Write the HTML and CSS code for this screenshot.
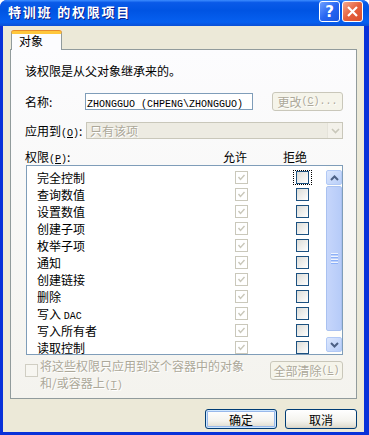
FILE: index.html
```html
<!DOCTYPE html>
<html lang="zh-CN">
<head>
<meta charset="utf-8">
<title>特训班 的权限项目</title>
<link rel="stylesheet" href="styles.css">
</head>
<body>
<div class="window">
  <div class="titlebar">
    <span class="title">特训班 的权限项目</span>
    <span class="tbtn help">?</span>
    <span class="tbtn close"><svg width="13" height="13" viewBox="0 0 13 13"><path d="M2 2 L11 11 M11 2 L2 11" stroke="#fff" stroke-width="2.2" fill="none"/></svg></span>
  </div>
  <div class="client">
    <div class="tabs"><span class="tab">对象</span></div>
    <div class="panel">
      <p class="info">该权限是从父对象继承来的。</p>
      <div class="row name-row">
        <span class="lbl">名称:</span>
        <span class="textbox"><span class="lat">ZHONGGUO (CHPENG\ZHONGGUO)</span></span>
        <span class="btn disabled change">更改<span class="lat">(<u>C</u>)...</span></span>
      </div>
      <div class="row apply-row">
        <span class="lbl">应用到<span class="lat">(<u>O</u>)</span>:</span>
        <span class="combo"><span class="combo-text">只有该项</span><span class="combo-btn"><svg width="9" height="6" viewBox="0 0 9 6"><path d="M1 1 L4.5 4.5 L8 1" stroke="#C9C7BA" stroke-width="1.6" fill="none"/></svg></span></span>
      </div>
      <div class="hdr">
        <span class="h1">权限<span class="lat">(<u>P</u>)</span>:</span>
        <span class="h2">允许</span>
        <span class="h3">拒绝</span>
      </div>
      <div class="listbox">
        <div class="rows">
          <div class="prow"><span class="pname">完全控制</span><span class="cb dis"><svg width="11" height="11" viewBox="0 0 11 11"><path d="M2.5 5 L4.5 7.5 L8.5 3" stroke="#C9C7BA" stroke-width="1.4" fill="none"/></svg></span><span class="focus"><span class="cb"></span></span></div>
          <div class="prow"><span class="pname">查询数值</span><span class="cb dis"><svg width="11" height="11" viewBox="0 0 11 11"><path d="M2.5 5 L4.5 7.5 L8.5 3" stroke="#C9C7BA" stroke-width="1.4" fill="none"/></svg></span><span class="nofocus"><span class="cb"></span></span></div>
          <div class="prow"><span class="pname">设置数值</span><span class="cb dis"><svg width="11" height="11" viewBox="0 0 11 11"><path d="M2.5 5 L4.5 7.5 L8.5 3" stroke="#C9C7BA" stroke-width="1.4" fill="none"/></svg></span><span class="nofocus"><span class="cb"></span></span></div>
          <div class="prow"><span class="pname">创建子项</span><span class="cb dis"><svg width="11" height="11" viewBox="0 0 11 11"><path d="M2.5 5 L4.5 7.5 L8.5 3" stroke="#C9C7BA" stroke-width="1.4" fill="none"/></svg></span><span class="nofocus"><span class="cb"></span></span></div>
          <div class="prow"><span class="pname">枚举子项</span><span class="cb dis"><svg width="11" height="11" viewBox="0 0 11 11"><path d="M2.5 5 L4.5 7.5 L8.5 3" stroke="#C9C7BA" stroke-width="1.4" fill="none"/></svg></span><span class="nofocus"><span class="cb"></span></span></div>
          <div class="prow"><span class="pname">通知</span><span class="cb dis"><svg width="11" height="11" viewBox="0 0 11 11"><path d="M2.5 5 L4.5 7.5 L8.5 3" stroke="#C9C7BA" stroke-width="1.4" fill="none"/></svg></span><span class="nofocus"><span class="cb"></span></span></div>
          <div class="prow"><span class="pname">创建链接</span><span class="cb dis"><svg width="11" height="11" viewBox="0 0 11 11"><path d="M2.5 5 L4.5 7.5 L8.5 3" stroke="#C9C7BA" stroke-width="1.4" fill="none"/></svg></span><span class="nofocus"><span class="cb"></span></span></div>
          <div class="prow"><span class="pname">删除</span><span class="cb dis"><svg width="11" height="11" viewBox="0 0 11 11"><path d="M2.5 5 L4.5 7.5 L8.5 3" stroke="#C9C7BA" stroke-width="1.4" fill="none"/></svg></span><span class="nofocus"><span class="cb"></span></span></div>
          <div class="prow"><span class="pname">写入 <span class="lat">DAC</span></span><span class="cb dis"><svg width="11" height="11" viewBox="0 0 11 11"><path d="M2.5 5 L4.5 7.5 L8.5 3" stroke="#C9C7BA" stroke-width="1.4" fill="none"/></svg></span><span class="nofocus"><span class="cb"></span></span></div>
          <div class="prow"><span class="pname">写入所有者</span><span class="cb dis"><svg width="11" height="11" viewBox="0 0 11 11"><path d="M2.5 5 L4.5 7.5 L8.5 3" stroke="#C9C7BA" stroke-width="1.4" fill="none"/></svg></span><span class="nofocus"><span class="cb"></span></span></div>
          <div class="prow"><span class="pname">读取控制</span><span class="cb dis"><svg width="11" height="11" viewBox="0 0 11 11"><path d="M2.5 5 L4.5 7.5 L8.5 3" stroke="#C9C7BA" stroke-width="1.4" fill="none"/></svg></span><span class="nofocus"><span class="cb"></span></span></div>
        </div>
        <div class="scrollbar">
          <span class="sbtn"><svg width="9" height="6" viewBox="0 0 9 6"><path d="M1 5 L4.5 1.5 L8 5" stroke="#4D6185" stroke-width="2" fill="none"/></svg></span>
          <span class="thumb"><span class="grip"></span><span class="grip"></span><span class="grip"></span><span class="grip"></span></span>
          <span class="track"></span>
          <span class="sbtn"><svg width="9" height="6" viewBox="0 0 9 6"><path d="M1 1 L4.5 4.5 L8 1" stroke="#4D6185" stroke-width="2" fill="none"/></svg></span>
        </div>
      </div>
      <div class="bottom">
        <span class="cb big dis"></span>
        <span class="applytext">将这些权限只应用到这个容器中的对象<br>和/或容器上<span class="lat">(<u>T</u>)</span></span>
        <span class="btn disabled clear">全部清除<span class="lat">(<u>L</u>)</span></span>
      </div>
    </div>
    <div class="footer">
      <span class="btn default">确定</span>
      <span class="btn">取消</span>
    </div>
  </div>
</div>
</body>
</html>
```
FILE: styles.css
```css
* { box-sizing: border-box; }
html, body { margin: 0; padding: 0; background: #fff; }
body { font-family: "Noto Sans CJK SC", "Noto Sans", sans-serif; font-size: 12px; color: #000; }
.lat { font-family: "Liberation Mono", monospace; font-size: 10px; line-height: 1; }
u { text-decoration: underline; }

.window {
  width: 369px; height: 435px;
  display: flex; flex-direction: column;
  background: #0831D9;
  border-radius: 7px 7px 0 0;
  overflow: hidden;
}
.titlebar {
  height: 26px; flex: none;
  display: flex; align-items: flex-start;
  padding: 1px 6px 0 8px;
  background: linear-gradient(#3C8CFF 0%, #0A5AE8 10%, #0054E3 40%, #0660F0 85%, #0A50D6 100%);
}
.title {
  flex: 1; color: #fff; font-weight: bold; font-size: 13px;
  letter-spacing: 1.8px; line-height: 22px;
  text-shadow: 1px 1px 0 #0A1E8C;
}
.tbtn {
  width: 21px; height: 21px; border: 1px solid #fff; border-radius: 3px;
  display: flex; align-items: center; justify-content: center;
  color: #fff; font-family: "DejaVu Sans", sans-serif; font-weight: bold; font-size: 15px;
}
.help { background: linear-gradient(135deg, #6FA0FF, #2766F2 50%, #1A55E0); margin-right: 2px; }
.close { background: linear-gradient(135deg, #F5A98F, #E5603D 50%, #D9502E); }

.client {
  flex: 1;
  margin: 0 5px 3px 3px;
  background: #ECE9D8;
  display: flex; flex-direction: column;
  padding: 5px 7px 0 7px;
}
.tabs { height: 18px; flex: none; display: flex; padding-left: 1px; }
.tab {
  position: relative; z-index: 1;
  width: 51px; height: 19px;
  border: 1px solid #919B9C; border-bottom: none;
  border-top: 3px solid #FFC73C;
  border-radius: 3px 3px 0 0;
  background: #FCFCFE;
  padding-left: 7px; line-height: 14px;
  box-shadow: 0 -1px 0 #E68B2C;
}
.panel {
  height: 350px; flex: none;
  border: 1px solid #919B9C;
  background: linear-gradient(#FCFCFE, #F4F3EE);
  padding: 0 13px 0 14px;
}
.info { margin: 12px 0 0; line-height: 17px; height: 17px; }
.row { display: flex; align-items: center; height: 19px; }
.name-row { margin-top: 13px; }
.apply-row { margin-top: 10px; }
.lbl { width: 60px; flex: none; }
.apply-row .lbl { width: 61px; }
.textbox {
  width: 168px; height: 17px; border: 1px solid #7F9DB9; background: #fff;
  padding-left: 1px; line-height: 15px; white-space: nowrap;
}
.btn {
  height: 20px; border: 1px solid #003C74; border-radius: 3px;
  background: linear-gradient(#FFFFFF, #F4F3EE 60%, #E3E0D4 90%, #D6D0C5);
  display: flex; align-items: center; justify-content: center;
  white-space: nowrap;
}
.btn.disabled {
  border-color: #C9C7BA; color: #ACA899; background: #F5F4EA;
  text-shadow: 1px 1px 0 #fff;
}
.change { width: 71px; height: 19px; margin-left: auto; }
.combo {
  width: 257px; height: 17px; border: 1px solid #C9C7BA; background: #EDEBE2;
  display: flex; align-items: center;
}
.combo-text { flex: 1; padding-left: 3px; color: #ACA899; text-shadow: 1px 1px 0 #fff; line-height: 15px; }
.combo-btn {
  width: 15px; height: 15px; background: #F3F1EA; border-left: 1px solid #E5E3DA;
  display: flex; align-items: center; justify-content: center;
}
.hdr { display: flex; align-items: center; margin-top: 8px; line-height: 17px; height: 17px; }
.h1 { width: 198px; }
.h2 { width: 60px; }

.listbox {
  height: 190px; width: 317px; margin-left: 1px;
  border: 1px solid #7F9DB9; background: #fff;
  display: flex; overflow: hidden;
}
.rows { flex: 1; padding-top: 3px; overflow: hidden; }
.prow { height: 17px; display: flex; align-items: center; padding-left: 10px; }
.pname { width: 198px; flex: none; white-space: nowrap; line-height: 17px; }
.cb {
  width: 13px; height: 13px; flex: none;
  border: 1px solid #1C5180;
  background: linear-gradient(135deg, #DCDCD7, #FFFFFF);
  display: flex; align-items: center; justify-content: center;
}
.cb.dis { border-color: #CAC8BB; background: #FFFFFF; }
.focus, .nofocus {
  width: 19px; height: 15px; margin-left: 45px;
  display: flex; align-items: center; justify-content: center;
}
.focus { border: 1px dotted #000; }

.scrollbar {
  width: 16px; flex: none; display: flex; flex-direction: column;
  padding: 4px 0 2px 0; background: #FEFEFB;
}
.sbtn {
  height: 15px; flex: none; border: 1px solid #B2C9F5; border-radius: 2px;
  background: linear-gradient(135deg, #DCE7FD, #B8CEF9);
  display: flex; align-items: center; justify-content: center;
}
.thumb {
  height: 145px; flex: none; margin-top: 1px;
  border: 1px solid #A9C1F0; border-radius: 2px;
  background: linear-gradient(90deg, #C6D6FB, #B6CBF8);
  display: flex; flex-direction: column; align-items: center; justify-content: center; gap: 1px;
}
.grip { width: 7px; height: 1px; background: #EEF4FE; box-shadow: 0 1px 0 #8CB0F8; margin-bottom: 1px; }
.track { flex: 1; }

.bottom { display: flex; align-items: flex-start; margin-top: 2px; }
.cb.big { margin-top: 7px; border-color: #D0CEC3; background: #F7F6F1; }
.applytext {
  margin-left: 2px; line-height: 17px; color: #ACA899; text-shadow: 1px 1px 0 #fff;
  width: 220px;
}
.clear { width: 73px; height: 19px; margin-left: auto; margin-top: 4px; }

.footer { display: flex; padding-top: 10px; padding-left: 195px; gap: 8px; }
.footer .btn { width: 72px; height: 20px; }
.btn.default { box-shadow: inset 0 0 0 1px #CEE7FF, inset 0 0 0 2px #98B8EA; }
```
